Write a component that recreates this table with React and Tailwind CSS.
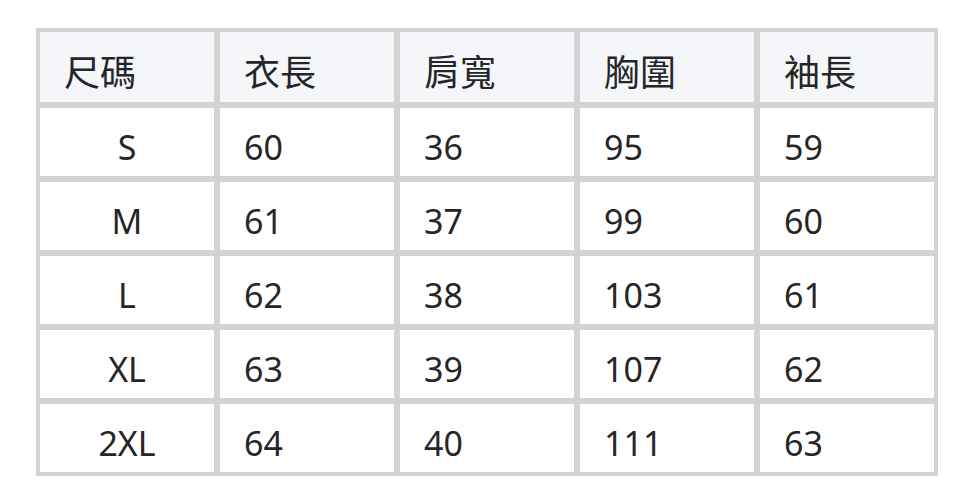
import React from 'react'

const headers = ['尺碼', '衣長', '肩寬', '胸圍', '袖長']

const rows = [
  ['S', '60', '36', '95', '59'],
  ['M', '61', '37', '99', '60'],
  ['L', '62', '38', '103', '61'],
  ['XL', '63', '39', '107', '62'],
  ['2XL', '64', '40', '111', '63'],
]

const App = () => {
  return (
    <div
      className="w-[972px] h-[503px] bg-white pl-[36px] pt-[28px] text-[#262626]"
      style={{ fontFamily: '"Noto Sans", "Noto Sans CJK TC", sans-serif' }}
    >
      <div className="inline-grid grid-cols-[repeat(5,174px)] grid-rows-[70px_repeat(5,68px)] gap-[6px] bg-[#d3d3d3] p-[4px]">
        {headers.map((h, i) => (
          <div
            key={i}
            className="flex items-center bg-[#f5f6fa] px-[24px] pt-[11px] text-[36px] leading-none"
          >
            {h}
          </div>
        ))}
        {rows.map((row, r) =>
          row.map((cell, c) => (
            <div
              key={r + '-' + c}
              className={
                'flex items-center bg-white px-[24px] pt-[10px] text-[34px] leading-none ' +
                (c === 0 ? 'justify-center' : '')
              }
            >
              {cell}
            </div>
          ))
        )}
      </div>
    </div>
  )
}

export default App
